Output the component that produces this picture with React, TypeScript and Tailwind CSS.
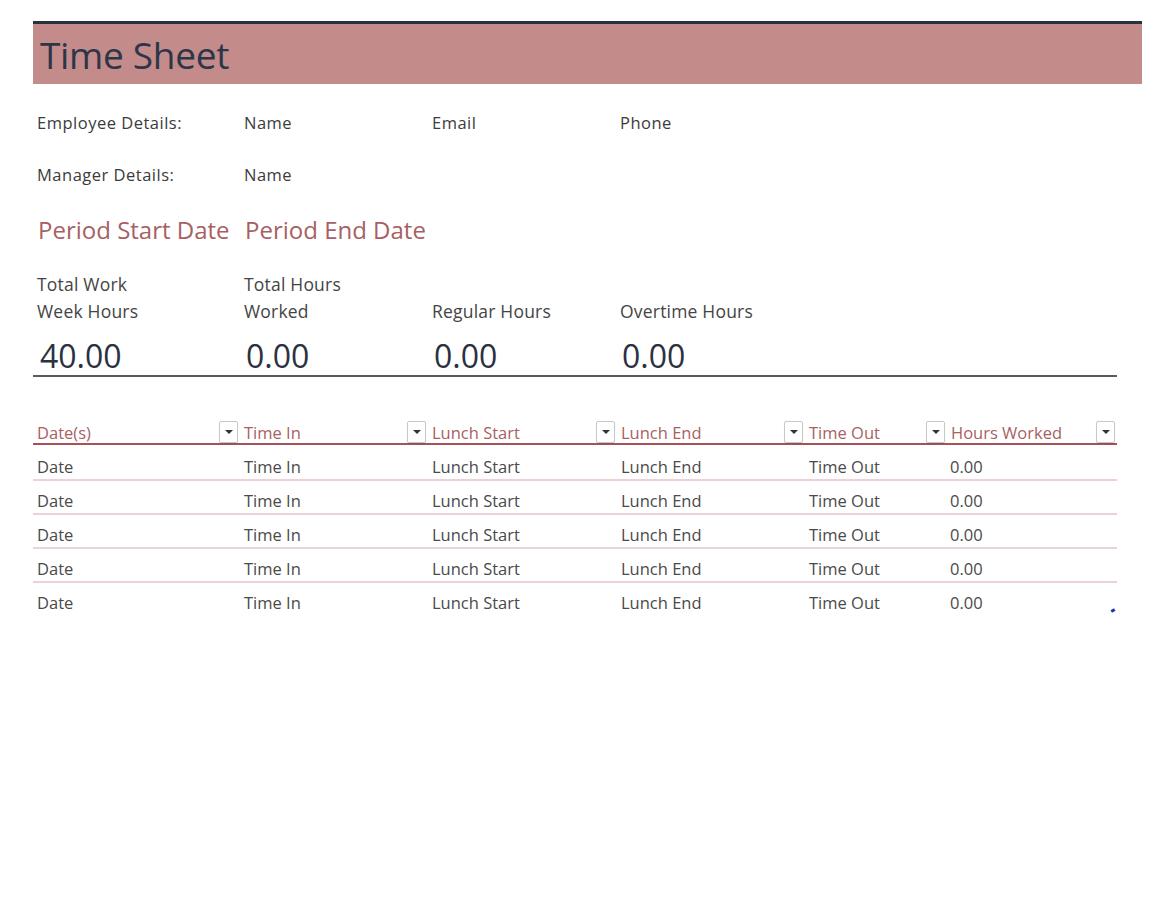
import React from "react";

const font = { fontFamily: '"Open Sans", "Noto Sans", sans-serif' };

function Drop() {
  return (
    <div className="w-[19px] h-[22px] border border-[#c8c8c8] rounded-[2px] bg-white flex items-center justify-center shadow-[0_1px_1px_rgba(0,0,0,0.08)]">
      <div className="w-0 h-0 border-l-[4px] border-r-[4px] border-t-[4px] border-l-transparent border-r-transparent border-t-[#333]" />
    </div>
  );
}

const cols = [
  { w: "w-[207px]", h: "Date(s)", d: "Date" },
  { w: "w-[188px]", h: "Time In", d: "Time In" },
  { w: "w-[189px]", h: "Lunch Start", d: "Lunch Start" },
  { w: "w-[188px]", h: "Lunch End", d: "Lunch End" },
  { w: "w-[142px]", h: "Time Out", d: "Time Out" },
  { w: "w-[170px]", h: "Hours Worked", d: "0.00" },
];

export default function App() {
  return (
    <div className="w-[1173px] h-[900px] bg-white text-[#3b3b3b]" style={font}>
      <div className="pt-[21px] pl-[33px]">
        <div className="w-[1109px] border-t-[3px] border-[#28303f]">
          <div className="h-[60px] bg-[#c48b8b] flex items-center pl-[7px]">
            <span className="text-[37px] text-[#2d3648] leading-none tracking-[-0.3px]">Time Sheet</span>
          </div>
        </div>

        <div className="flex h-[28px] items-center mt-[25px] text-[16.5px] tracking-[0.5px]">
          <div className="w-[207px] pl-[4px] whitespace-nowrap">Employee Details:</div>
          <div className="w-[188px] pl-[4px]">Name</div>
          <div className="w-[188px] pl-[4px]">Email</div>
          <div className="w-[188px] pl-[4px]">Phone</div>
        </div>
        <div className="flex h-[28px] items-center mt-[24px] text-[16.5px] tracking-[0.5px]">
          <div className="w-[207px] pl-[4px] whitespace-nowrap">Manager Details:</div>
          <div className="w-[188px] pl-[4px]">Name</div>
        </div>
        <div className="flex h-[34px] items-center mt-[24px] text-[24px] text-[#a85f63]">
          <div className="w-[207px] pl-[5px] whitespace-nowrap">Period Start Date</div>
          <div className="w-[188px] pl-[5px] whitespace-nowrap">Period End Date</div>
        </div>

        <div className="flex mt-[24px] text-[17.5px] leading-[27px] text-[#444] tracking-[0.2px]">
          <div className="w-[207px] pl-[4px]">Total Work<br />Week Hours</div>
          <div className="w-[188px] pl-[4px]">Total Hours<br />Worked</div>
          <div className="w-[188px] pl-[4px] flex flex-col justify-end">Regular Hours</div>
          <div className="w-[188px] pl-[4px] flex flex-col justify-end">Overtime Hours</div>
        </div>
        <div className="flex h-[52px] pt-[12px] leading-[38px] text-[32px] text-[#2b3140] border-b-2 border-[#5a5a5a] w-[1084px]">
          <div className="w-[207px] pl-[7px]">40.00</div>
          <div className="w-[188px] pl-[6px]">0.00</div>
          <div className="w-[188px] pl-[6px]">0.00</div>
          <div className="w-[188px] pl-[6px]">0.00</div>
        </div>

        <div className="w-[1084px] mt-[44px]">
          <div className="flex h-[24px] items-end border-b-2 border-[#a65358] text-[16.5px] text-[#a85f63]">
            {cols.map((c) => (
              <div key={c.h} className={`${c.w} flex items-end justify-between pl-[4px] pr-[2px] h-[22px]`}>
                <span className="whitespace-nowrap leading-[20px]">{c.h}</span>
                <Drop />
              </div>
            ))}
          </div>
          <div className="mt-[2px]">
            {[0, 1, 2, 3, 4].map((r) => (
              <div
                key={r}
                className={`flex h-[34px] pt-[10px] leading-[20px] text-[16.5px] text-[#4a4a4a] ${r < 4 ? "border-b-2 border-[#ecd2d6]" : ""}`}
              >
                {cols.map((c, i) => (
                  <div key={c.h} className={`${c.w} ${i === 5 ? "pl-[3px]" : "pl-[4px]"} whitespace-nowrap`}>{c.d}</div>
                ))}
              </div>
            ))}
          </div>
          <div className="relative h-0">
            <div className="absolute right-[2px] -top-[8px] w-[4px] h-[3px] bg-[#2233aa] rotate-[-30deg]" />
          </div>
        </div>
      </div>
    </div>
  );
}
